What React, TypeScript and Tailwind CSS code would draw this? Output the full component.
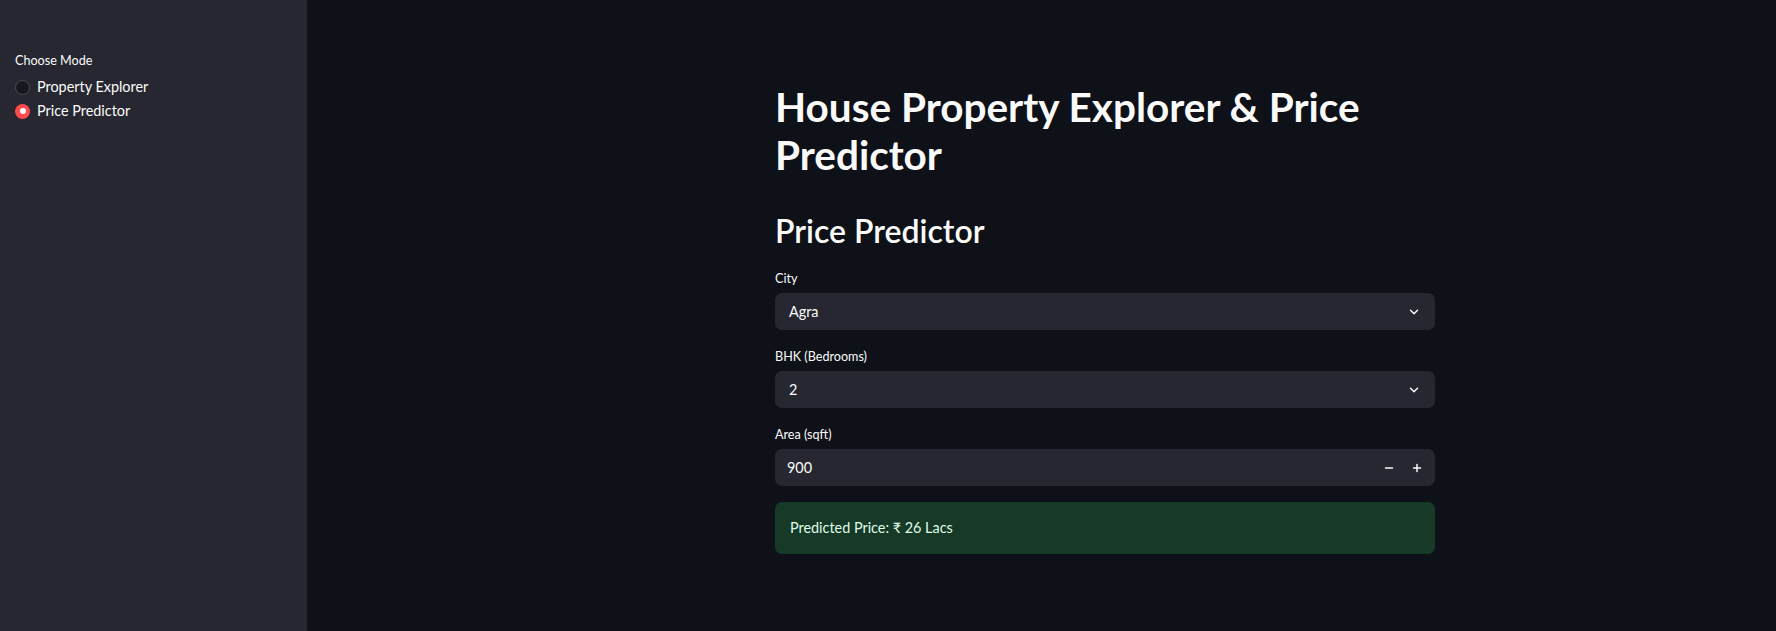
import { ChevronDown, Minus, Plus } from "lucide-react";

function SelectBox({ label, value }: { label: string; value: string }) {
  return (
    <div className="mb-[18px]">
      <div className="mb-[5px] text-[12.6px] leading-[18px] text-[#fafafa]">{label}</div>
      <div className="flex h-[37px] items-center justify-between rounded-[7px] bg-[#262730] pl-[14px] pr-[14px]">
        <span className="text-[14.4px] text-[#fafafa]">{value}</span>
        <ChevronDown className="h-[14px] w-[14px] text-[#fafafa]" strokeWidth={2.5} />
      </div>
    </div>
  );
}

export default function App() {
  return (
    <div className="flex h-[631px] w-full bg-[#0e1117] font-['Lato','Noto_Sans',sans-serif] text-[#fafafa]">
      <aside className="w-[307px] shrink-0 bg-[#262730] px-[15px] pt-[52px]">
        <div className="mb-[8px] text-[12.6px] leading-[18px]">Choose Mode</div>
        <div className="flex flex-col gap-[6px]">
          <div className="flex items-center gap-[7px]">
            <span className="h-[15px] w-[15px] rounded-full border border-[#4b4d58] bg-[#16181f]" />
            <span className="text-[14.4px] leading-[18px]">Property Explorer</span>
          </div>
          <div className="flex items-center gap-[7px]">
            <span className="flex h-[15px] w-[15px] items-center justify-center rounded-full bg-[#ff4b4b]">
              <span className="h-[6px] w-[6px] rounded-full bg-white" />
            </span>
            <span className="text-[14.4px] leading-[18px]">Price Predictor</span>
          </div>
        </div>
      </aside>
      <main className="flex-1">
        <div className="ml-[468px] w-[660px] pt-[83px]">
          <h1 className="mb-[32px] text-[40.5px] font-bold leading-[48px]">
            House Property Explorer &amp; Price Predictor
          </h1>
          <h2 className="mb-[19px] text-[32px] font-semibold leading-[40px]">Price Predictor</h2>
          <SelectBox label="City" value="Agra" />
          <SelectBox label="BHK (Bedrooms)" value="2" />
          <div className="mb-[16px]">
            <div className="mb-[5px] text-[12.6px] leading-[18px] text-[#fafafa]">Area (sqft)</div>
            <div className="flex h-[37px] items-center justify-between rounded-[7px] bg-[#262730] pl-[12px] pr-[12px]">
              <span className="text-[14.4px]">900</span>
              <div className="flex items-center gap-[16px]">
                <Minus className="h-[12px] w-[12px]" strokeWidth={3} />
                <Plus className="h-[12px] w-[12px]" strokeWidth={3} />
              </div>
            </div>
          </div>
          <div className="flex h-[52px] items-center rounded-[7px] bg-[#173928] px-[15px] text-[14.4px] text-[#dffde9]">
            Predicted Price: ₹ 26 Lacs
          </div>
        </div>
      </main>
    </div>
  );
}
